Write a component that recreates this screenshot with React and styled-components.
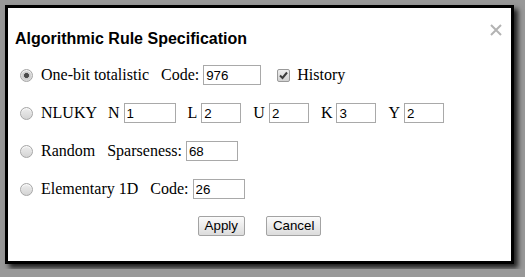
import React from 'react';
import styled, { createGlobalStyle } from 'styled-components';

const Global = createGlobalStyle`
  html, body {
    margin: 0;
    padding: 0;
    background: #989898;
  }
  body {
    font-family: "Liberation Serif", "Times New Roman", serif;
    color: #000;
  }
`;

const Dialog = styled.div`
  position: relative;
  box-sizing: border-box;
  width: 509px;
  height: 259px;
  margin: 5px;
  background: #fff;
  border: 3px solid #000;
  box-shadow: 4px 4px 5px rgba(0, 0, 0, 0.8);
  padding: 21px 7px 0 7px;
`;

const Close = styled.button`
  position: absolute;
  top: 16px;
  right: 9px;
  width: 12px;
  height: 12px;
  padding: 0;
  border: none;
  background: transparent;
  cursor: pointer;
  display: flex;
`;

const Title = styled.h3`
  margin: 0;
  font-family: "Liberation Sans", Arial, sans-serif;
  font-weight: bold;
  font-size: 16px;
  line-height: 20px;
  height: 20px;
`;

const Form = styled.div`
  margin-top: 7px;
  display: flex;
  flex-direction: column;
`;

const Row = styled.label`
  display: flex;
  align-items: center;
  height: 38px;
  font-size: 16px;
  white-space: nowrap;
`;

const Radio = styled.span`
  box-sizing: border-box;
  width: 13px;
  height: 13px;
  margin: 0 8px 0 5px;
  border-radius: 50%;
  border: 1px solid #a6a6a6;
  background: ${({ checked }) =>
    checked
      ? 'radial-gradient(circle, #4a4a4a 0 2.2px, #c8c8c8 2.8px, #eeeeee 100%)'
      : 'linear-gradient(#ededed, #d4d4d4)'};
  box-shadow: inset 0 1px 1px rgba(255, 255, 255, 0.8);
  flex-shrink: 0;
`;

const Field = styled.span`
  display: flex;
  align-items: center;
  gap: 4px;
  margin-left: ${({ gap }) => gap ?? 12}px;
`;

const TextInput = styled.input`
  box-sizing: border-box;
  width: ${({ w }) => w}px;
  height: 20px;
  margin: 0;
  padding: 1px 2px;
  border: 1px solid #a9a9a9;
  font-family: "Liberation Sans", Arial, sans-serif;
  font-size: 13.33px;
  color: #000;
  outline: none;
`;

const CheckBox = styled.span`
  box-sizing: border-box;
  width: 13px;
  height: 13px;
  margin: 0 7px 0 16px;
  border: 1px solid #9a9a9a;
  border-radius: 2px;
  background: linear-gradient(#eeeeee, #d2d2d2);
  display: flex;
  align-items: center;
  justify-content: center;
`;

const Buttons = styled.div`
  display: flex;
  justify-content: center;
  gap: 21px;
  padding-top: 8px;
`;

const Button = styled.button`
  box-sizing: border-box;
  height: 20px;
  margin: 0;
  padding: 1px 6px;
  border: 1px solid #a3a3a3;
  border-radius: 2px;
  background: linear-gradient(#fbfbfb, #dcdcdc);
  font-family: "Liberation Sans", Arial, sans-serif;
  font-size: 13.33px;
  color: #000;
  line-height: 16px;
`;

const Rule = ({ checked, name, children }) => (
  <Row>
    <Radio checked={checked} />
    <span>{name}</span>
    {children}
  </Row>
);

export default function App() {
  return (
    <>
      <Global />
      <Dialog>
        <Close aria-label="Close">
          <svg width="12" height="12" viewBox="0 0 12 12">
            <path d="M1 1 L11 11 M11 1 L1 11" stroke="#b3b3b3" strokeWidth="2" />
          </svg>
        </Close>
        <Title>Algorithmic Rule Specification</Title>
        <Form>
          <Rule checked name="One-bit totalistic">
            <Field>
              Code: <TextInput w={58} defaultValue="976" />
            </Field>
            <CheckBox>
              <svg width="9" height="9" viewBox="0 0 9 9">
                <path d="M1 4.5 L3.5 7 L8 1.5" stroke="#3c3c3c" strokeWidth="2" fill="none" />
              </svg>
            </CheckBox>
            <span>History</span>
          </Rule>
          <Rule name="NLUKY">
            <Field gap={11}>
              N <TextInput w={52} defaultValue="1" />
            </Field>
            <Field>
              L <TextInput w={40} defaultValue="2" />
            </Field>
            <Field>
              U <TextInput w={40} defaultValue="2" />
            </Field>
            <Field>
              K <TextInput w={40} defaultValue="3" />
            </Field>
            <Field>
              Y <TextInput w={40} defaultValue="2" />
            </Field>
          </Rule>
          <Rule name="Random">
            <Field>
              Sparseness: <TextInput w={52} defaultValue="68" />
            </Field>
          </Rule>
          <Rule name="Elementary 1D">
            <Field>
              Code: <TextInput w={52} defaultValue="26" />
            </Field>
          </Rule>
        </Form>
        <Buttons>
          <Button>Apply</Button>
          <Button>Cancel</Button>
        </Buttons>
      </Dialog>
    </>
  );
}
